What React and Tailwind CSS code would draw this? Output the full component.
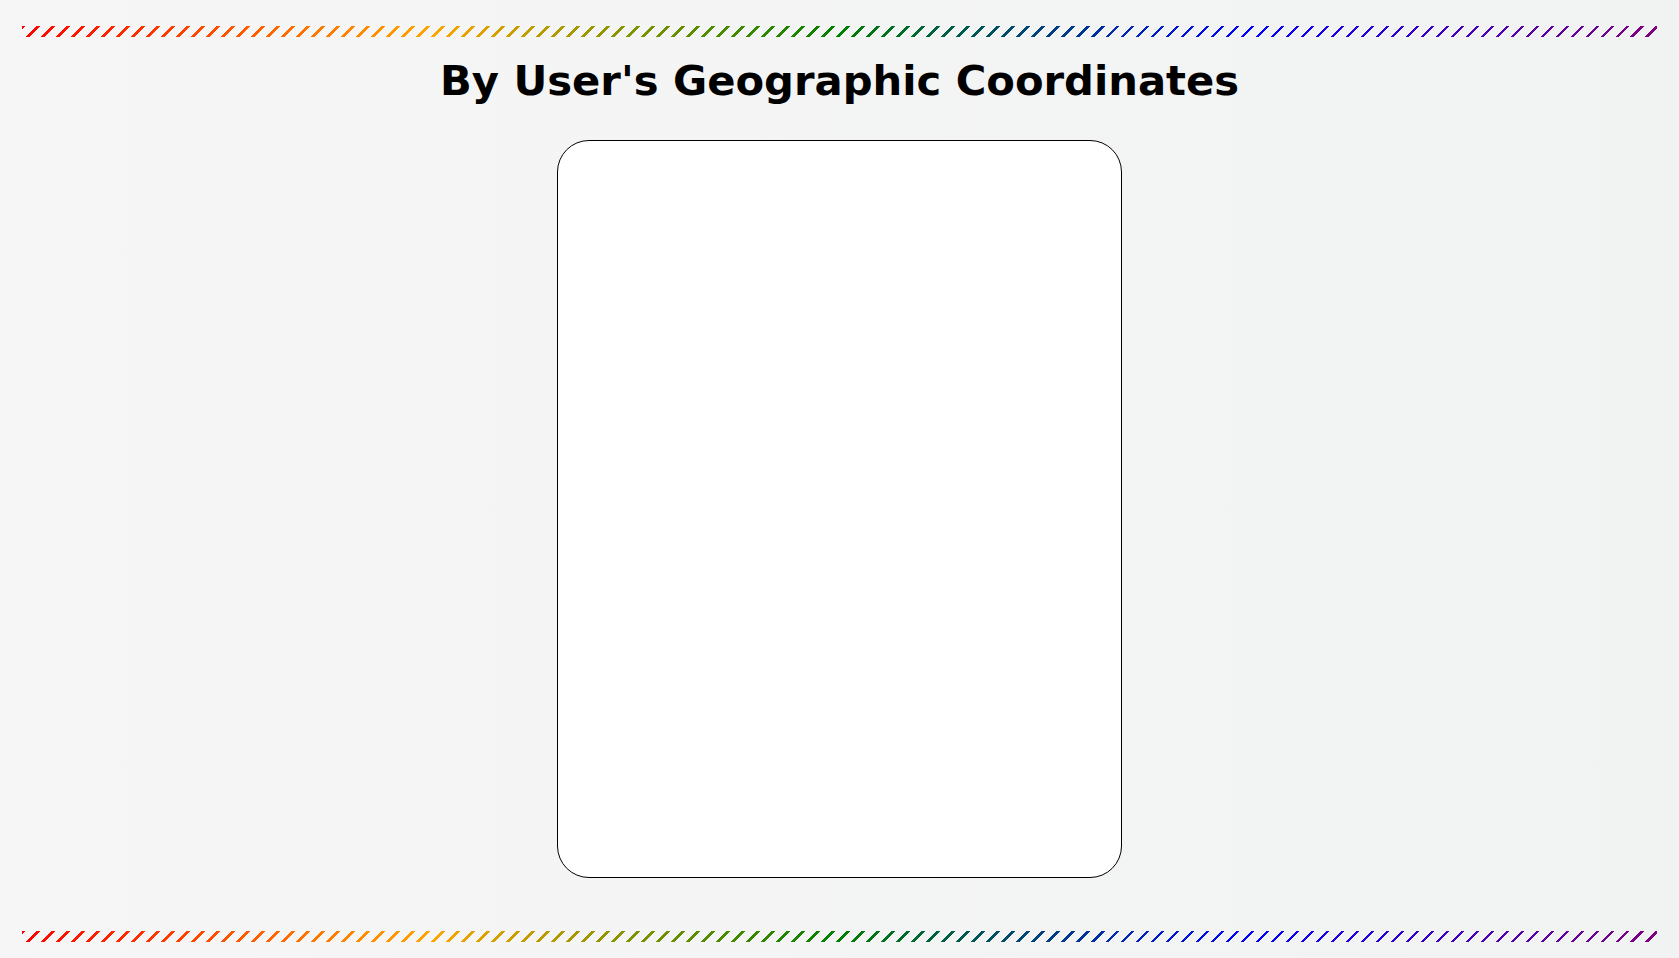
import React from "react";

function Stripe() {
  return (
    <div
      className="h-[11px] w-full bg-[linear-gradient(to_right,#ff0000_0%,#ffa500_25%,#008000_50%,#0000ff_75%,#800080_100%)] [mask-image:repeating-linear-gradient(135deg,#000_0_2.6px,transparent_2.6px_10.6px)] [-webkit-mask-image:repeating-linear-gradient(135deg,#000_0_2.6px,transparent_2.6px_10.6px)]"
    />
  );
}

export default function App() {
  return (
    <div className="min-h-screen w-full bg-[linear-gradient(to_right,#f6f6f6,#f1f2f2)] px-[22px] pt-[26px] pb-[16px] flex flex-col items-center">
      {/* top border */}
      <Stripe />

      <h1 className="mt-[20px] font-['DejaVu_Sans','Verdana',sans-serif] font-bold text-[41.7px] leading-[48px] text-black">
        By User's Geographic Coordinates
      </h1>

      {/* empty card */}
      <div className="mt-[35px] w-[565px] h-[738px] bg-white border border-black rounded-[32px]" />

      {/* bottom border */}
      <div className="mt-[53px] w-full">
        <Stripe />
      </div>
    </div>
  );
}
